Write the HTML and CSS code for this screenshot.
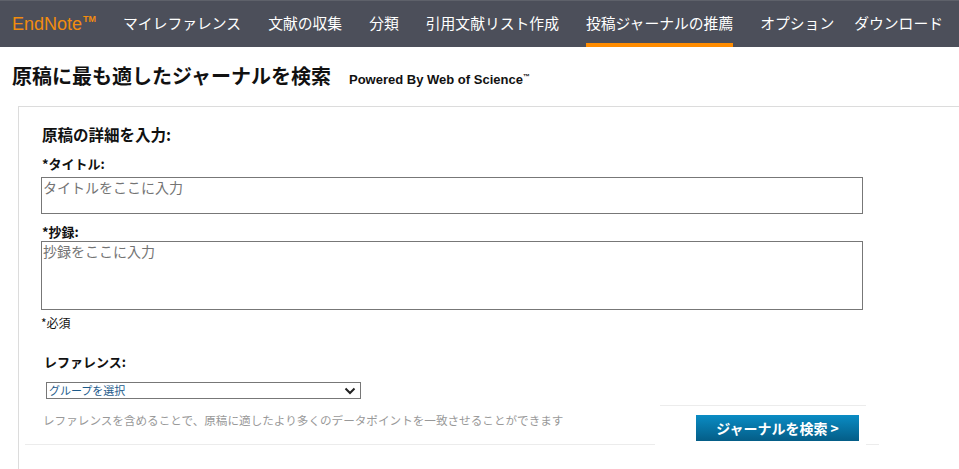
FILE: index.html
```html
<!DOCTYPE html>
<html lang="ja">
<head>
    <meta charset="UTF-8">
    <meta name="viewport" content="width=device-width, initial-scale=1.0">
    <title>投稿ジャーナルの推薦 - EndNote</title>
    <link rel="stylesheet" href="styles.css">
</head>
<body>
    <nav class="topnav">
        <div class="logo"><span>EndNote<sup>TM</sup></span></div>
        <a class="nav-item" href="#">マイレファレンス</a>
        <a class="nav-item" href="#">文献の収集</a>
        <a class="nav-item" href="#">分類</a>
        <a class="nav-item" href="#">引用文献リスト作成</a>
        <a class="nav-item active" href="#">投稿ジャーナルの推薦</a>
        <a class="nav-item" href="#">オプション</a>
        <a class="nav-item last" href="#">ダウンロード</a>
    </nav>

    <div class="page-header">
        <h1>原稿に最も適したジャーナルを検索</h1>
        <span class="powered">Powered By Web of Science<sup>™</sup></span>
    </div>

    <div class="container">
        <h2>原稿の詳細を入力:</h2>

        <label class="field-label" for="title">*タイトル:</label>
        <textarea id="title" class="title-box" placeholder="タイトルをここに入力"></textarea>

        <label class="field-label abstract-label" for="abstract">*抄録:</label>
        <textarea id="abstract" class="abstract-box" placeholder="抄録をここに入力"></textarea>

        <p class="required">*必須</p>

        <div class="refs">
            <label class="field-label" for="group">レファレンス:</label>
            <div class="select-wrap">
                <select id="group">
                    <option>グループを選択</option>
                </select>
                <svg class="chevron" width="12" height="8" viewBox="0 0 12 8">
                    <path d="M1.5 1.5 L6 6 L10.5 1.5" fill="none" stroke="#222" stroke-width="2"/>
                </svg>
            </div>
        </div>

        <div class="footer">
            <div class="footer-note">レファレンスを含めることで、原稿に適したより多くのデータポイントを一致させることができます</div>
            <div class="footer-action">
                <button>ジャーナルを検索 &gt;</button>
            </div>
            <div class="footer-end"></div>
        </div>
    </div>
</body>
</html>
```

FILE: styles.css
```css
:root {
    --nav-bg: #4c4f5a;
    --accent: #f28c0f;
    --text: #111;
}

body {
    margin: 0;
    font-family: "Noto Sans CJK JP", sans-serif;
    color: var(--text);
    background: #fff;
}

.topnav {
    display: flex;
    align-items: stretch;
    height: 46px;
    padding-left: 12px;
    background: var(--nav-bg);
    border-top: 1px solid #5e616a;
}

.logo {
    display: flex;
    align-items: center;
    padding-bottom: 1px;
    font-family: "Liberation Sans", Arial, sans-serif;
    font-size: 18px;
    line-height: 20px;
    color: var(--accent);
}

.logo sup {
    font-size: 9px;
    font-weight: bold;
    line-height: 0;
    vertical-align: 8px;
    margin-left: 1px;
}

.nav-item {
    display: flex;
    align-items: center;
    margin-left: 27px;
    padding-bottom: 4px;
    color: #fff;
    font-size: 14.8px;
    text-decoration: none;
    white-space: nowrap;
}

.nav-item.active {
    box-shadow: inset 0 -4px 0 #ff8c00;
}

.nav-item.last {
    margin-left: 20px;
}

.page-header {
    display: flex;
    align-items: baseline;
    padding: 15px 12px 16px;
}

h1 {
    margin: 0;
    font-size: 20px;
    line-height: 28px;
    font-weight: bold;
}

.powered {
    margin-left: 18px;
    font-family: "Liberation Sans", Arial, sans-serif;
    font-size: 13px;
    font-weight: bold;
}

.powered sup {
    font-size: 7px;
}

.container {
    margin-left: 18px;
    padding: 17px 0 40px 22px;
    border-top: 1px solid #dcdcdc;
    border-left: 1px solid #dcdcdc;
}

h2 {
    margin: 0 0 11px 1px;
    font-size: 15.5px;
    line-height: 20px;
}

.field-label {
    display: block;
    margin: 0 0 4px 1px;
    font-size: 13px;
    line-height: 18px;
    font-weight: bold;
}

.abstract-label {
    margin-top: 9px;
    margin-bottom: 0;
}

textarea {
    display: block;
    box-sizing: border-box;
    width: 822px;
    margin: 0;
    padding: 0 1px;
    border: 1px solid #777;
    font-family: "Noto Sans CJK JP", sans-serif;
    font-size: 14px;
    line-height: 19px;
    resize: none;
}

textarea::placeholder {
    color: #747474;
}

.title-box {
    height: 37px;
}

.abstract-box {
    height: 69px;
}

.required {
    margin: 5px 0 0;
    font-size: 12px;
    line-height: 16px;
}

.refs {
    margin: 22px 0 0 4px;
}

.refs .field-label {
    margin: 0 0 11px -1px;
}

.select-wrap {
    position: relative;
    width: 315px;
}

select {
    display: block;
    box-sizing: border-box;
    width: 315px;
    height: 17px;
    margin: 0 0 0 1px;
    padding: 0 2px;
    border: 1px solid #777;
    border-radius: 0;
    background: #fff;
    color: #1d5b8b;
    font-family: "Noto Sans CJK JP", sans-serif;
    font-size: 11px;
    line-height: 15px;
    appearance: none;
}

.chevron {
    position: absolute;
    right: 4px;
    top: 5px;
}

.footer {
    display: flex;
    margin: 6px 0 0 -16px;
}

.footer-note {
    width: 612px;
    padding: 8px 0 16px 18px;
    border-bottom: 1px solid #ececec;
    color: #999;
    font-size: 11.6px;
    line-height: 15px;
    white-space: nowrap;
}

.footer-action {
    width: 199px;
    margin-left: 5px;
    padding: 9px 7px 4px 0;
    border-top: 1px solid #ececec;
    text-align: right;
}

.footer-end {
    width: 13px;
    border-bottom: 1px solid #ececec;
}

button {
    width: 163px;
    height: 26px;
    border: none;
    background: linear-gradient(#0a8cc4, #045d87);
    color: #fff;
    font-family: "Noto Sans CJK JP", sans-serif;
    font-size: 14px;
    font-weight: bold;
    cursor: pointer;
}
```
